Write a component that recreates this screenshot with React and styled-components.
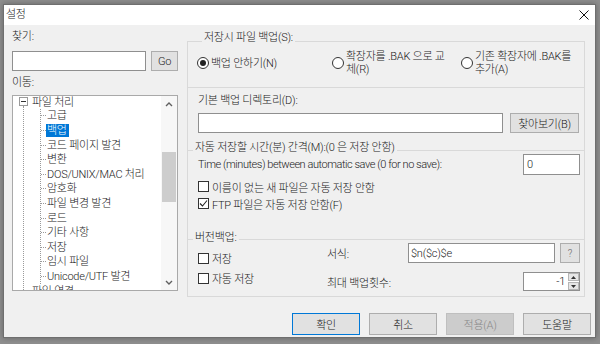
import React from 'react';
import styled, { createGlobalStyle, css } from 'styled-components';

const GlobalStyle = createGlobalStyle`
  html, body { margin: 0; padding: 0; }
  body {
    background: #8f8f8f;
    font-family: Roboto, "Noto Sans CJK KR", sans-serif;
    font-size: 11px;
    font-weight: 300;
    letter-spacing: -0.25px;
    color: #1a1a1a;
  }
  * { box-sizing: border-box; }
`;

const Screen = styled.div`
  width: 600px;
  height: 344px;
  padding: 4px 0 0 3px;
  overflow: hidden;
`;

const Window = styled.div`
  width: 593px;
  height: 334px;
  border: 1px solid #6f6f6f;
  background: #f0f0f0;
  display: flex;
  flex-direction: column;
  box-shadow: 0 0 6px rgba(0, 0, 0, 0.3);
`;

const TitleBar = styled.div`
  flex: none;
  height: 20px;
  background: #fff;
  display: flex;
  align-items: center;
  justify-content: space-between;
  padding-left: 2px;
  line-height: 20px;
`;

const CloseButton = styled.div`
  width: 20px;
  height: 20px;
  margin-right: 1px;
  display: flex;
  align-items: center;
  justify-content: center;
`;

const Body = styled.div`
  flex: 1;
  display: flex;
  flex-direction: column;
  padding: 4px 4px 0 8px;
`;

const Main = styled.div`
  display: flex;
  align-items: flex-start;
`;

const LeftCol = styled.div`
  width: 166px;
  display: flex;
  flex-direction: column;
`;

const FieldLabel = styled.div`
  height: 16px;
  line-height: 16px;
  margin-top: ${(p) => p.$top || 0}px;
`;

const Row = styled.div`
  display: flex;
  align-items: center;
  gap: ${(p) => p.$gap || 0}px;
  margin-top: ${(p) => p.$top || 0}px;
  height: ${(p) => (p.$h ? `${p.$h}px` : 'auto')};
  justify-content: ${(p) => p.$justify || 'flex-start'};
`;

const Hint = styled.span`
  letter-spacing: -0.45px;
  white-space: nowrap;
`;

const TextField = styled.input`
  font: inherit;
  letter-spacing: inherit;
  color: #1a1a1a;
  height: ${(p) => p.$h || 20}px;
  width: ${(p) => (p.$w ? `${p.$w}px` : 'auto')};
  flex: ${(p) => (p.$w ? 'none' : 1)};
  min-width: 0;
  border: 1px solid #8f8f8f;
  background: #fff;
  padding: 0 ${(p) => p.$padX || 2}px;
  margin: 0;
  outline: none;
  text-align: ${(p) => p.$align || 'left'};
`;

const Button = styled.button`
  font: inherit;
  letter-spacing: inherit;
  color: #1a1a1a;
  margin: 0;
  padding: 0;
  width: ${(p) => p.$w}px;
  height: ${(p) => p.$h || 22}px;
  background: #e1e1e1;
  border: 1px solid #adadad;
  flex: none;
  ${(p) =>
    p.$default &&
    css`
      border-color: #0078d7;
    `}
  ${(p) =>
    p.$disabled &&
    css`
      background: #cccccc;
      border-color: #bfbfbf;
      color: #8a8a8a;
    `}
`;

const SmallButton = styled(Button)`
  font-size: 10px;
  color: #666;
`;

/* ---------- Tree ---------- */

const Tree = styled.div`
  margin-top: 4px;
  height: 196px;
  border: 1px solid #a9a9a9;
  background: #fff;
  display: flex;
  overflow: hidden;
`;

const TreeView = styled.div`
  flex: 1;
  overflow: hidden;
`;

const TreeList = styled.div`
  margin-top: -2px;
`;

const RootRow = styled.div`
  display: flex;
  align-items: center;
  height: 14.6px;
  white-space: nowrap;
`;

const Expander = styled.div`
  width: 9px;
  height: 9px;
  margin-left: 6px;
  border: 1px solid #9a9a9a;
  background: #fff;
  display: flex;
  align-items: center;
  justify-content: center;
  position: relative;
  z-index: 1;
  &::after {
    content: '';
    width: 5px;
    height: 1px;
    background: #333;
  }
`;

const RootLabel = styled.span`
  margin-left: 4px;
`;

const Branch = styled.div`
  margin-left: 10px;
  margin-top: -3px;
  padding-top: 3px;
  border-left: 1px dotted #9a9a9a;
`;

const ChildGroup = styled.div`
  margin-left: 16px;
  border-left: 1px dotted #9a9a9a;
`;

const ChildRow = styled.div`
  display: flex;
  align-items: center;
  height: 14.6px;
  white-space: nowrap;
  &::before {
    content: '';
    flex: none;
    width: ${(p) => p.$stub || 5}px;
    border-top: 1px dotted #9a9a9a;
  }
`;

const NodeLabel = styled.span`
  height: 13px;
  line-height: 13px;
  padding: 0 2px 0 1px;
  ${(p) =>
    p.$selected &&
    css`
      background: #0078d7;
      color: #fff;
    `}
`;

const ScrollBar = styled.div`
  width: 16px;
  flex: none;
  background: #f7f7f7;
  display: flex;
  flex-direction: column;
`;

const ScrollArrow = styled.div`
  height: 16px;
  display: flex;
  align-items: center;
  justify-content: center;
`;

const ScrollThumb = styled.div`
  margin: 40px 1px 0 1px;
  height: 50px;
  background: #cdcdcd;
`;

const ScrollSpacer = styled.div`
  flex: 1;
`;

/* ---------- Right panel ---------- */

const Panel = styled.div`
  margin: 12px 0 0 9px;
  width: 398px;
  height: 256px;
  border: 1px solid #d9d9d9;
  display: flex;
  flex-direction: column;
`;

const Section = styled.div`
  display: flex;
  flex-direction: column;
  flex: ${(p) => (p.$grow ? '1' : 'none')};
  height: ${(p) => (p.$h ? `${p.$h}px` : 'auto')};
  padding: ${(p) => p.$pad || '0'};
  border-top: ${(p) => (p.$line ? '1px solid #d9d9d9' : 'none')};
`;

const Legend = styled.div`
  align-self: flex-start;
  height: 12px;
  line-height: 12px;
  padding: 0 2px;
  margin: ${(p) => p.$mt}px 0 0 ${(p) => p.$ml || 5}px;
  background: #f0f0f0;
  white-space: nowrap;
`;

const RadioRow = styled.div`
  display: grid;
  grid-template-columns: 135px 129px 1fr;
  margin-top: 6px;
  line-height: 13px;
`;

const RadioItem = styled.label`
  display: flex;
  align-items: center;
  gap: 2px;
  height: 26px;
  white-space: nowrap;
`;

const RadioCircle = styled.span`
  flex: none;
  width: 12px;
  height: 12px;
  border-radius: 50%;
  border: 1px solid #333;
  background: #fff;
  display: flex;
  align-items: center;
  justify-content: center;
  &::after {
    content: '';
    width: 6px;
    height: 6px;
    border-radius: 50%;
    background: ${(p) => (p.$checked ? '#222' : 'transparent')};
  }
`;

const CheckRow = styled.label`
  display: flex;
  align-items: center;
  gap: 3px;
  height: ${(p) => p.$h || 17}px;
  margin-top: ${(p) => p.$top || 0}px;
  white-space: nowrap;
`;

const CheckBox = styled.span`
  flex: none;
  width: 11px;
  height: 11px;
  border: 1px solid #333;
  background: #fff;
  display: flex;
  align-items: center;
  justify-content: center;
`;

const VersionBody = styled.div`
  display: flex;
  margin-top: -1px;
`;

const VersionChecks = styled.div`
  width: 129px;
  display: flex;
  flex-direction: column;
  gap: 4px;
  padding-top: 7px;
`;

const VersionFields = styled.div`
  flex: 1;
  display: flex;
  flex-direction: column;
`;

const FormLabel = styled.span`
  width: 76px;
  flex: none;
  white-space: nowrap;
`;

const Spinner = styled.div`
  margin-left: auto;
  width: 57px;
  height: 19px;
  border: 1px solid #8f8f8f;
  background: #fff;
  display: flex;
`;

const SpinValue = styled.div`
  flex: 1;
  text-align: right;
  padding-right: 3px;
  line-height: 17px;
`;

const SpinButtons = styled.div`
  width: 11px;
  display: flex;
  flex-direction: column;
  gap: 1px;
`;

const SpinButton = styled.div`
  flex: 1;
  background: #e6e6e6;
  border: 1px solid #b5b5b5;
  display: flex;
  align-items: center;
  justify-content: center;
`;

const ButtonRow = styled.div`
  margin-top: auto;
  margin-bottom: 2px;
  display: flex;
  justify-content: flex-end;
  gap: 9px;
`;

const CheckMark = () => (
  <svg width="9" height="9" viewBox="0 0 9 9">
    <polyline points="1,4.5 3.5,7 8,1.5" fill="none" stroke="#222" strokeWidth="1.1" />
  </svg>
);

const Check = ({ checked, children, ...rest }) => (
  <CheckRow {...rest}>
    <CheckBox>{checked && <CheckMark />}</CheckBox>
    <span>{children}</span>
  </CheckRow>
);

const Radio = ({ checked, children }) => (
  <RadioItem>
    <RadioCircle $checked={checked} />
    <span>{children}</span>
  </RadioItem>
);

const Chevron = ({ down }) => (
  <svg width="8" height="5" viewBox="0 0 8 5">
    <polyline
      points={down ? '1,1 4,4 7,1' : '1,4 4,1 7,4'}
      fill="none"
      stroke="#606060"
      strokeWidth="1.4"
    />
  </svg>
);

const Tri = ({ down }) => (
  <svg width="5" height="3" viewBox="0 0 5 3">
    <polygon points={down ? '0,0 5,0 2.5,3' : '0,3 5,3 2.5,0'} fill="#333" />
  </svg>
);

const children = [
  '고급',
  '백업',
  '코드 페이지 발견',
  '변환',
  'DOS/UNIX/MAC 처리',
  '암호화',
  '파일 변경 발견',
  '로드',
  '기타 사항',
  '저장',
  '임시 파일',
  'Unicode/UTF 발견',
];

export default function App() {
  return (
    <>
      <GlobalStyle />
      <Screen>
        <Window>
          <TitleBar>
            <span>설정</span>
            <CloseButton>
              <svg width="10" height="10" viewBox="0 0 10 10">
                <path d="M0.5 0.5 L9.5 9.5 M9.5 0.5 L0.5 9.5" stroke="#111" strokeWidth="1" />
              </svg>
            </CloseButton>
          </TitleBar>
          <Body>
            <Main>
              <LeftCol>
                <FieldLabel>찾기:</FieldLabel>
                <Row $top={6} $gap={5}>
                  <TextField readOnly value="" />
                  <Button $w={27} $h={20}>Go</Button>
                </Row>
                <FieldLabel $top={4}>이동:</FieldLabel>
                <Tree>
                  <TreeView>
                    <TreeList>
                      <RootRow>
                        <Expander />
                        <RootLabel>파일 처리</RootLabel>
                      </RootRow>
                      <Branch>
                        <ChildGroup>
                          {children.map((c) => (
                            <ChildRow key={c}>
                              <NodeLabel $selected={c === '백업'}>{c}</NodeLabel>
                            </ChildRow>
                          ))}
                        </ChildGroup>
                        <ChildRow $stub={7}>
                          <NodeLabel>파일 연결</NodeLabel>
                        </ChildRow>
                      </Branch>
                    </TreeList>
                  </TreeView>
                  <ScrollBar>
                    <ScrollArrow>
                      <Chevron />
                    </ScrollArrow>
                    <ScrollThumb />
                    <ScrollSpacer />
                    <ScrollArrow>
                      <Chevron down />
                    </ScrollArrow>
                  </ScrollBar>
                </Tree>
              </LeftCol>

              <Panel>
                <Section $h={45} $pad="0 0 0 9px">
                  <Legend $mt={-10}>저장시 파일 백업(S):</Legend>
                  <RadioRow>
                    <Radio checked>백업 안하기(N)</Radio>
                    <Radio>
                      확장자를 .BAK 으로 교<br />체(R)
                    </Radio>
                    <Radio>
                      기존 확장자에 .BAK를<br />추가(A)
                    </Radio>
                  </RadioRow>
                </Section>

                <Section $line $h={63} $pad="5px 5px 0 10px">
                  <FieldLabel>기본 백업 디렉토리(D):</FieldLabel>
                  <Row $top={4} $gap={7}>
                    <TextField readOnly value="" $h={20} />
                    <Button $w={69} $h={20}>찾아보기(B)</Button>
                  </Row>
                </Section>

                <Section $line $h={89} $pad="0 4px 0 10px">
                  <Legend $mt={-9} $ml={-5}>자동 저장할 시간(분) 간격(M):(0 은 저장 안함)</Legend>
                  <Row $h={21} $justify="space-between">
                    <Hint>Time (minutes) between automatic save (0 for no save):</Hint>
                    <TextField readOnly value="0" $w={57} $h={21} $padX={3} />
                  </Row>
                  <Check $top={3}>이름이 없는 새 파일은 자동 저장 안함</Check>
                  <Check checked>FTP 파일은 자동 저장 안함(F)</Check>
                </Section>

                <Section $line $grow $pad="0 4px 0 10px">
                  <Legend $mt={-8} $ml={-5}>버전백업:</Legend>
                  <VersionBody>
                    <VersionChecks>
                      <Check $h={16}>저장</Check>
                      <Check $h={16}>자동 저장</Check>
                    </VersionChecks>
                    <VersionFields>
                      <Row $h={20} $gap={5}>
                        <FormLabel>서식:</FormLabel>
                        <TextField readOnly value="$n($c)$e" $h={20} />
                        <SmallButton $w={20} $h={20}>?</SmallButton>
                      </Row>
                      <Row $h={19} $top={9}>
                        <FormLabel>최대 백업횟수:</FormLabel>
                        <Spinner>
                          <SpinValue>-1</SpinValue>
                          <SpinButtons>
                            <SpinButton>
                              <Tri />
                            </SpinButton>
                            <SpinButton>
                              <Tri down />
                            </SpinButton>
                          </SpinButtons>
                        </Spinner>
                      </Row>
                    </VersionFields>
                  </VersionBody>
                </Section>
              </Panel>
            </Main>

            <ButtonRow>
              <Button $w={68} $default>확인</Button>
              <Button $w={68}>취소</Button>
              <Button $w={68} $disabled>적용(A)</Button>
              <Button $w={68}>도움말</Button>
            </ButtonRow>
          </Body>
        </Window>
      </Screen>
    </>
  );
}
